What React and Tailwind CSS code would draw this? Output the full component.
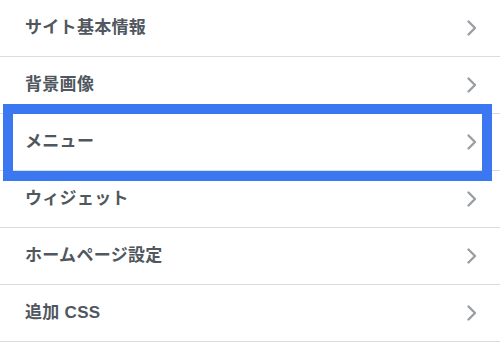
const items = [
  "サイト基本情報",
  "背景画像",
  "メニュー",
  "ウィジェット",
  "ホームページ設定",
  "追加 CSS",
];

function Chevron() {
  return (
    <svg width="12" height="18" viewBox="0 0 12 18" className="shrink-0">
      <polyline
        points="2.5,2.5 9,9 2.5,15.5"
        fill="none"
        stroke="#9a9ea3"
        strokeWidth="2.4"
        strokeLinecap="round"
        strokeLinejoin="round"
      />
    </svg>
  );
}

export default function App() {
  return (
    <div
      className="w-[500px] h-[344px] bg-white overflow-hidden"
      style={{ fontFamily: '"Liberation Sans", "Noto Sans CJK JP", sans-serif' }}
    >
      {items.map((label, i) => (
        <div
          key={label}
          className="relative flex items-center justify-between h-[57px] border-b border-[#dcdcde] pl-[25px] pr-[22px]"
        >
          <span className="text-[17px] font-semibold text-[#50575e] tracking-[0.3px]">{label}</span>
          <Chevron />
          {i === 2 ? (
            // highlight frame drawn over the "メニュー" row
            <div className="absolute left-[3px] right-[8px] top-[-10px] bottom-[-11px] border-[10px] border-[#3b77f0] pointer-events-none" />
          ) : null}
        </div>
      ))}
    </div>
  );
}
